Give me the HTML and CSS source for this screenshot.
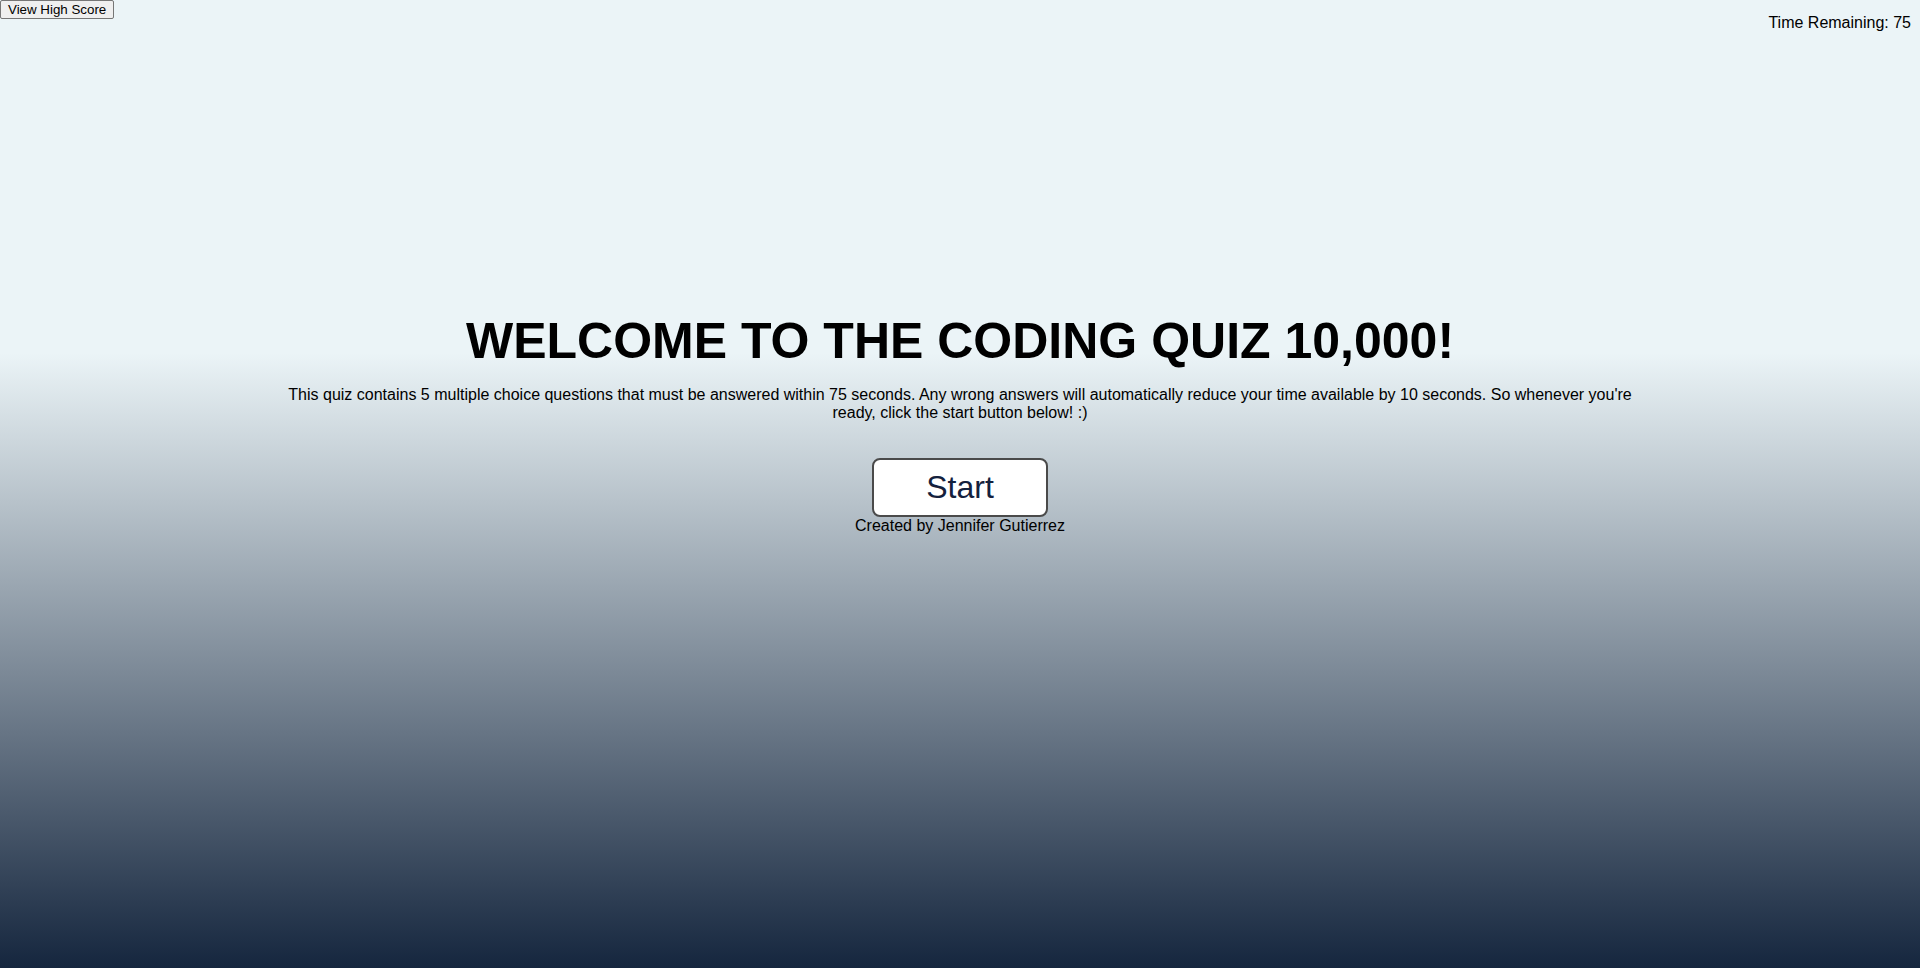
FILE: index.html
```html
<!DOCTYPE html>
<html lang="en">
<head>
<meta charset="utf-8">
<title>Coding Quiz</title>
<link rel="stylesheet" href="styles.css">
</head>
<body>
<header class="topbar">
  <button class="hs-btn" type="button">View High Score</button>
  <div class="timer">Time Remaining: 75</div>
</header>
<main class="intro">
  <h1 class="title">WELCOME TO THE CODING QUIZ 10,000!</h1>
  <p class="desc">This quiz contains 5 multiple choice questions that must be answered within 75 seconds. Any wrong answers will automatically reduce your time available by 10 seconds. So whenever you're ready, click the start button below! :)</p>
  <button class="start-btn" type="button">Start</button>
  <p class="credit">Created by Jennifer Gutierrez</p>
</main>
</body>
</html>
```
FILE: styles.css
```css
html, body {
  margin: 0;
  padding: 0;
}
body {
  min-height: 968px;
  font-family: "Liberation Sans", Arial, sans-serif;
  color: #000;
  background: linear-gradient(to bottom, #ebf4f7 0%, #ebf4f7 36.5%, #15263e 100%);
}
.topbar {
  display: flex;
  justify-content: space-between;
  align-items: flex-start;
  height: 32px;
}
.hs-btn {
  font-family: "Liberation Sans", Arial, sans-serif;
  font-size: 13.333px;
  padding: 1px 7px;
  margin: 0;
  border: 1px solid #767676;
  border-radius: 2px;
  background: #efefef;
  color: #000;
}
.timer {
  font-size: 16px;
  margin: 14px 9px 0 0;
}
.intro {
  width: 70%;
  margin: 0 auto;
  padding-top: 280px;
  text-align: center;
}
.title {
  font-size: 50px;
  font-weight: bold;
  margin: 0 0 16px;
}
.desc {
  font-size: 16px;
  margin: 0 0 36px;
}
.start-btn {
  box-sizing: border-box;
  width: 176px;
  height: 59px;
  font-family: "Liberation Sans", Arial, sans-serif;
  font-size: 32px;
  color: #14213d;
  background: #fff;
  border: 2px solid #4a4a4a;
  border-radius: 8px;
  padding: 0;
  display: block;
  margin: 0 auto;
}
.credit {
  font-size: 16px;
  margin: 0;
}
```
